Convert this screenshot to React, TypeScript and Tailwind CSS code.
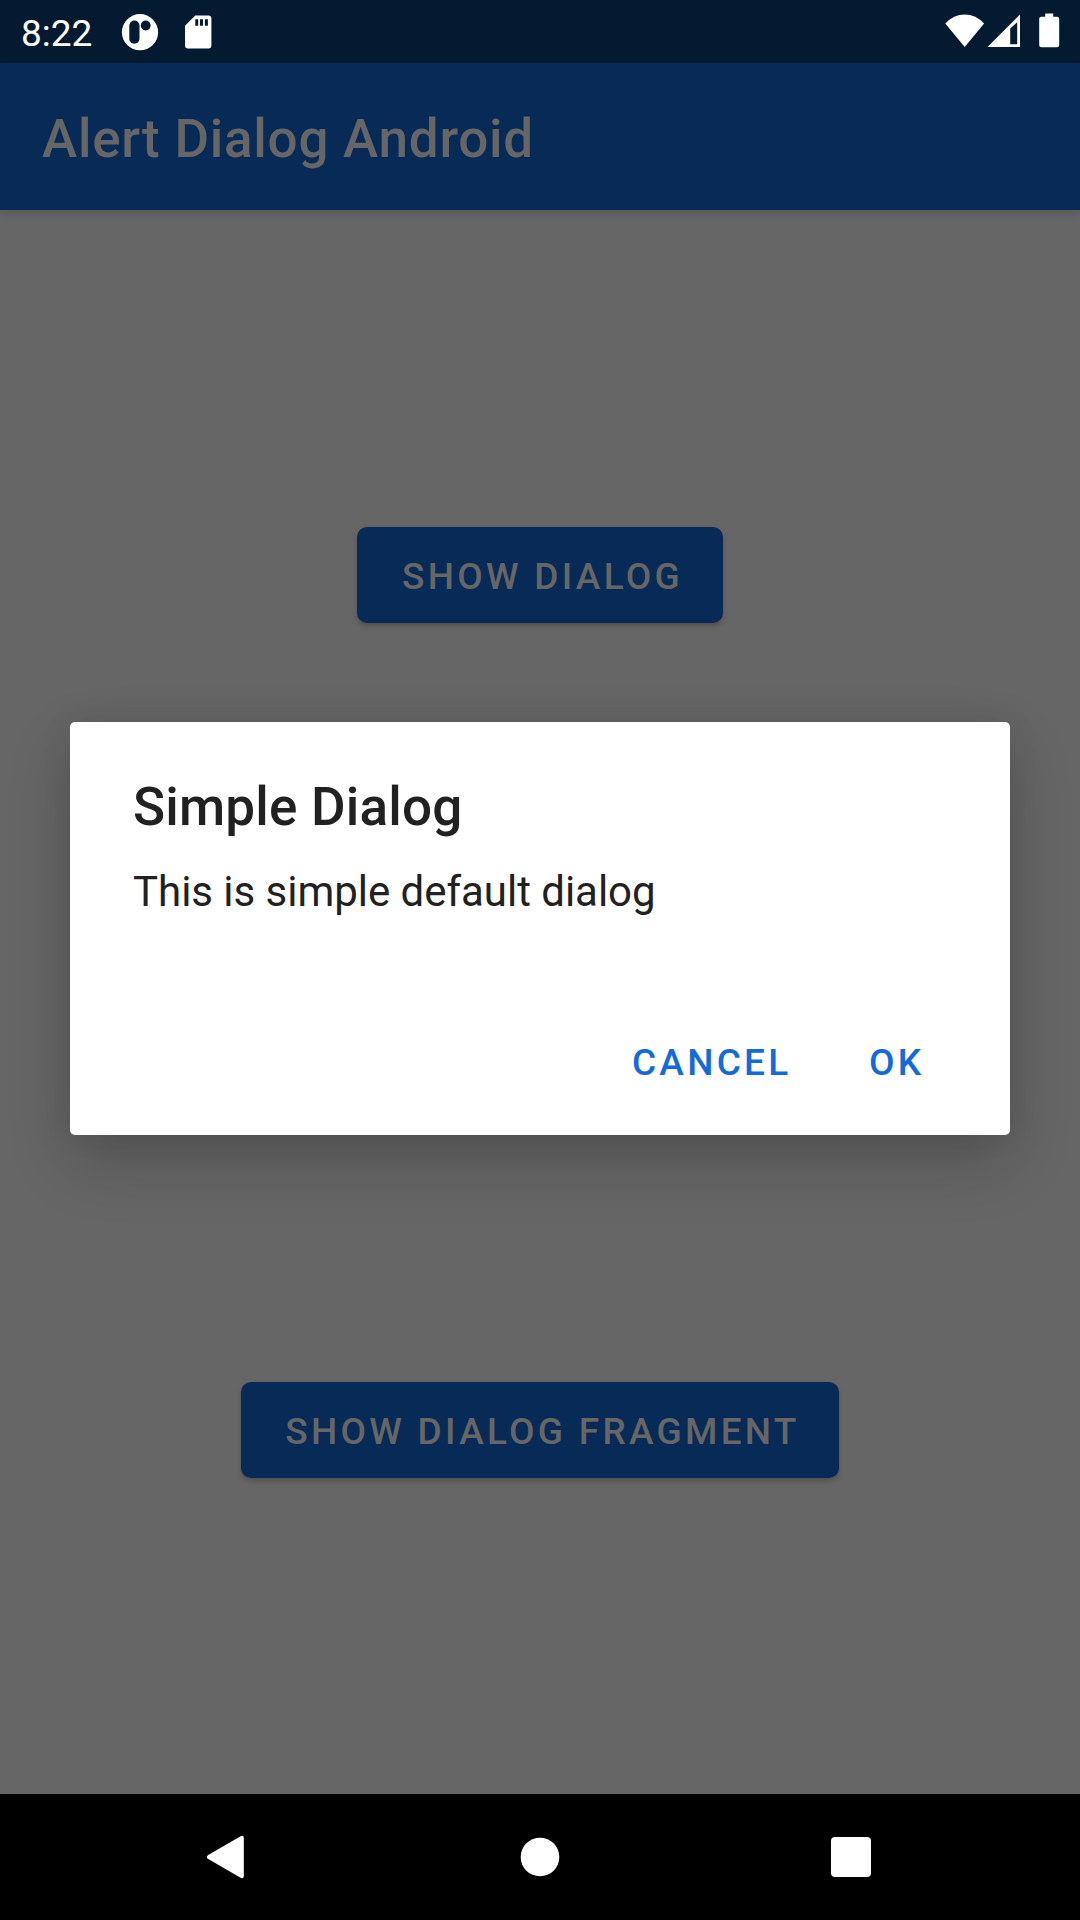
import React from "react";

function StatusBar() {
  return (
    <header className="flex h-[63px] shrink-0 items-center justify-between bg-[#031a31] pl-[21px] pr-5 text-white">
      <div className="flex h-full items-center">
        <span className="w-[100px] pt-[4px] text-[37px] leading-[60px]">8:22</span>
        <svg className="h-[38px] w-[38px]" viewBox="0 0 38 38" fill="none">
          <circle cx="19" cy="19.2" r="18.1" fill="white" />
          <rect x="8.3" y="7.5" width="10.2" height="23.3" rx="5.1" fill="#031a31" />
          <circle cx="24.7" cy="12.5" r="4.9" fill="#031a31" />
        </svg>
        <svg className="ml-[25px] h-[34px] w-[28px]" viewBox="0 0 28 34">
          <path
            fill="white"
            fillRule="evenodd"
            d="M11.2 0.5H24.3Q27.4 0.5 27.4 3.6V30.4Q27.4 33.4 24.3 33.4H4Q1 33.4 1 30.4V10.8ZM11.3 4.2V10.7H14.2V4.2ZM16 4.2V10.7H19V4.2ZM20.9 4.2V10.7H23.9V4.2Z"
          />
        </svg>
      </div>
      <div className="flex items-center pb-[2px]">
        <svg className="h-[34px] w-[40px]" viewBox="0 0 40 34">
          <path fill="white" d="M0.3 9.6Q8.5 0.5 19.7 0.5T39.1 9.6L19.7 33Z" />
        </svg>
        <svg className="ml-[2px] h-[34px] w-[34px]" viewBox="0 0 34 34">
          <path fill="white" fillRule="evenodd" d="M33 0.5V33H0.5ZM23.2 14.6V30.2H30.2V8.2Z" />
        </svg>
        <svg className="ml-[18px] h-[35px] w-[21px]" viewBox="0 0 21 35">
          <path
            fill="white"
            d="M6.2 0.5H14.2V3.8H17.9Q20.2 3.8 20.2 6.1V32Q20.2 34.2 17.9 34.2H2.4Q0.2 34.2 0.2 32V6.1Q0.2 3.8 2.4 3.8H6.2Z"
          />
        </svg>
      </div>
    </header>
  );
}

function RaisedButton({ label, width }: { label: string; width: string }) {
  return (
    <button
      className={`${width} h-24 whitespace-nowrap rounded-[10px] bg-[#082a56] pl-[5px] pt-[2px] text-center text-[37px] font-medium leading-none tracking-[3.28px] text-[#666666] shadow-[0_3px_5px_rgba(0,0,0,0.22)]`}
    >
      {label}
    </button>
  );
}

function SimpleDialog() {
  return (
    <div className="absolute inset-0 flex flex-col items-center pt-[722px]">
      <section className="flex h-[413px] w-[940px] flex-col rounded-[5px] bg-white pl-[63px] text-[#212121] shadow-[0_26px_64px_rgba(0,0,0,0.2),0_0_32px_rgba(0,0,0,0.07)]">
        <h2 className="mt-[54px] text-[53px] font-medium leading-[62px] tracking-[0.2px]">Simple Dialog</h2>
        <p className="mt-[29px] text-[42px] leading-[50px] tracking-[-0.03px]">This is simple default dialog</p>
        <div className="mt-[121px] flex justify-end gap-[77.5px] pr-[85.5px] text-[37px] font-medium leading-[50px] tracking-[3.28px] text-[#146ad8]">
          <button>CANCEL</button>
          <button>OK</button>
        </div>
      </section>
    </div>
  );
}

function NavigationBar() {
  return (
    <nav className="flex h-[126px] shrink-0 items-center bg-black pl-[206px]">
      <svg className="h-11 w-[38px]" viewBox="0 0 38 44">
        <path fill="white" d="M1.8 20.2L34.6 1.2Q37.8 -0.2 37.8 3V41Q37.8 44.2 34.6 42.8L1.8 23.8Q0 22 1.8 20.2Z" />
      </svg>
      <svg className="ml-[276px] h-10 w-10" viewBox="0 0 40 40">
        <circle cx="20" cy="20" r="19.3" fill="white" />
      </svg>
      <span className="ml-[271px] h-10 w-10 rounded-[4px] bg-white" />
    </nav>
  );
}

export default function App() {
  return (
    <div
      className="relative flex h-[1920px] w-[1080px] flex-col overflow-hidden bg-[#666666]"
      style={{ fontFamily: "Roboto, sans-serif" }}
    >
      <StatusBar />
      <div className="flex h-[147px] shrink-0 items-center bg-[#082a56] pl-[42px] pt-[5px] shadow-[0_4px_8px_rgba(0,0,0,0.12)]">
        <h1 className="text-[53px] font-medium leading-none tracking-[0.75px] text-[#666666]">Alert Dialog Android</h1>
      </div>
      <main className="flex grow flex-col items-center pt-[317px]">
        <RaisedButton label="SHOW DIALOG" width="w-[366px]" />
        <div className="h-[759px]" />
        <RaisedButton label="SHOW DIALOG FRAGMENT" width="w-[598px]" />
      </main>
      <NavigationBar />
      <SimpleDialog />
    </div>
  );
}
